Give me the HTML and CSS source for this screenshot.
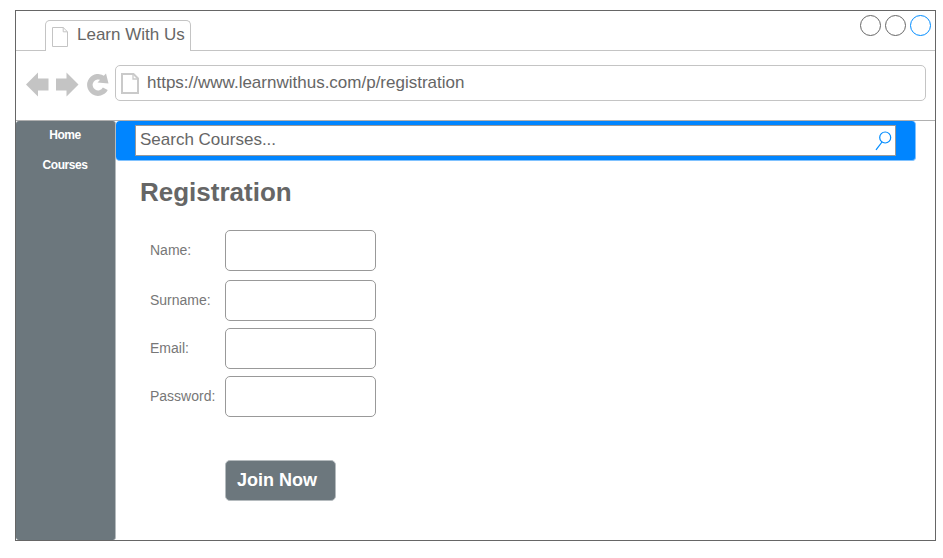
FILE: index.html
```html
<!DOCTYPE html>
<html lang="en">
<head>
<meta charset="utf-8">
<title>Learn With Us</title>
<link rel="stylesheet" href="styles.css">
</head>
<body>
<div class="window">
  <div class="tabs">
    <div class="tabs-start"></div>
    <div class="tab">
      <svg class="tab-icon" width="18" height="20" viewBox="0 0 18 20" fill="none" stroke="#c4c4c4"><path d="M1.5 .5h10.7l4.300 4.300v14.700h-15zM12.200 .5v4.300h4.300"/></svg>
      <span class="tab-title">Learn With Us</span>
    </div>
    <div class="tabs-end">
      <svg width="72" height="22" viewBox="0 0 72 22" fill="none" stroke="#666"><circle cx="10.500" cy="10.500" r="10"/><circle cx="35.500" cy="10.500" r="10"/><circle cx="60.500" cy="10.500" r="10" stroke="#008cff"/></svg>
    </div>
  </div>
  <div class="toolbar">
    <svg class="nav-icons" width="84" height="36" viewBox="0 0 84 36">
      <path fill="#c4c4c4" d="M0 19.500 12 7.500v6h10.500v12H12v6zM52.500 19.500l-12-12v6H30v12h10.500v6z"/>
      <path fill="none" stroke="#c4c4c4" stroke-width="5.500" d="M79.300 23.800A8.200 8.200 0 1 1 77.300 13.600"/>
      <path fill="#c4c4c4" d="m80 8.500 2.500 10-11-.9z"/>
    </svg>
    <div class="address">
      <svg width="19" height="21" viewBox="0 0 19 21" fill="none" stroke="#cacaca" stroke-width="2"><path d="M1 1h11.500l4.500 4.500v14.500h-16z"/><path stroke-width="1.300" d="M12 1v5h5"/></svg>
      <span class="url">https://www.learnwithus.com/p/registration</span>
    </div>
  </div>
  <div class="page">
    <nav class="sidebar">
      <a>Home</a>
      <a>Courses</a>
    </nav>
    <main class="content">
      <div class="header">
        <div class="search">
          <span>Search Courses...</span>
          <svg width="17" height="20" viewBox="0 0 17 20" fill="none" stroke="#008cff" stroke-width="1.200"><circle cx="10.200" cy="6.500" r="5.500"/><path d="M7 11 1 18.800"/></svg>
        </div>
      </div>
      <h1>Registration</h1>
      <form class="form">
        <label class="row row-wide"><span>Name:</span><input type="text"></label>
        <label class="row"><span>Surname:</span><input type="text"></label>
        <label class="row"><span>Email:</span><input type="text"></label>
        <label class="row"><span>Password:</span><input type="password"></label>
        <button type="button">Join Now</button>
      </form>
    </main>
  </div>
</div>
</body>
</html>
```
FILE: styles.css
```css
* { box-sizing: border-box; }
body {
  margin: 0;
  padding: 10px 0 0 15px;
  background: #fff;
  color: #666;
  font-family: "Liberation Sans", Arial, sans-serif;
}
svg { display: block; flex: none; }
.window {
  width: 921px;
  height: 531px;
  border: 1px solid #666;
}
.tabs { display: flex; height: 40px; }
.tabs-start { width: 29px; border-bottom: 1px solid #c4c4c4; }
.tab {
  display: flex;
  width: 146px;
  margin-top: 9px;
  padding-left: 5px;
  border: 1px solid #c4c4c4;
  border-bottom: 0;
  border-radius: 5px 5px 0 0;
}
.tab-icon { margin-top: 6px; }
.tab-title {
  margin-left: 8px;
  font-size: 17px;
  line-height: 27px;
  white-space: nowrap;
}
.tabs-end {
  display: flex;
  flex: 1;
  justify-content: flex-end;
  padding: 4px 3px 0 0;
  border-bottom: 1px solid #c4c4c4;
}
.toolbar {
  display: flex;
  height: 70px;
  padding: 14px 9px 0 10px;
  border-bottom: 1px solid #b0b0b0;
}
.address {
  display: flex;
  flex: 1;
  height: 36px;
  margin-left: 5px;
  padding: 7px 0 0 5px;
  border: 1px solid #c4c4c4;
  border-radius: 5px;
}
.url { margin-left: 7px; font-size: 17px; line-height: 20px; }
.page { display: flex; height: 419px; }
.sidebar {
  width: 100px;
  padding: 5px 1px 0 0;
  border-right: 1px solid #b5bbbe;
  background: #6c777d;
  border-radius: 3px;
  color: #fff;
  font-size: 12px;
  font-weight: bold;
  letter-spacing: -.45px;
  text-align: center;
}
.sidebar a { display: block; height: 30px; line-height: 18px; }
.content { flex: 1; }
.header {
  width: 800px;
  height: 40px;
  padding: 4px 19px 0 19px;
  border: solid #80c2ff;
  border-width: 0 1px 1px 0;
  background: #0085ff;
  border-radius: 4px;
}
.search {
  display: flex;
  justify-content: space-between;
  height: 31px;
  padding: 5px 3px 0 4px;
  border: 1px solid #999;
  background: #fff;
  font-size: 17px;
  line-height: 18px;
}
h1 {
  margin: 16px 0 0 24px;
  font-size: 26px;
  line-height: 30px;
}
.form { padding: 23px 0 0 34px; }
.row {
  display: flex;
  align-items: center;
  margin-bottom: 7px;
  color: #777;
  font-size: 14px;
}
.row-wide { margin-bottom: 9px; }
.row span { width: 75px; padding-bottom: 2px; }
.row input {
  width: 151px;
  height: 41px;
  padding: 0 8px;
  border: 1px solid #999;
  border-radius: 5px;
  font: inherit;
}
button {
  display: block;
  width: 111px;
  height: 41px;
  margin: 43px 0 0 75px;
  padding: 0 7px 1px 0;
  border: 1px solid #b5bbbe;
  border-radius: 5px;
  background: #6c777d;
  color: #fff;
  font: bold 18px "Liberation Sans", Arial, sans-serif;
}
```
